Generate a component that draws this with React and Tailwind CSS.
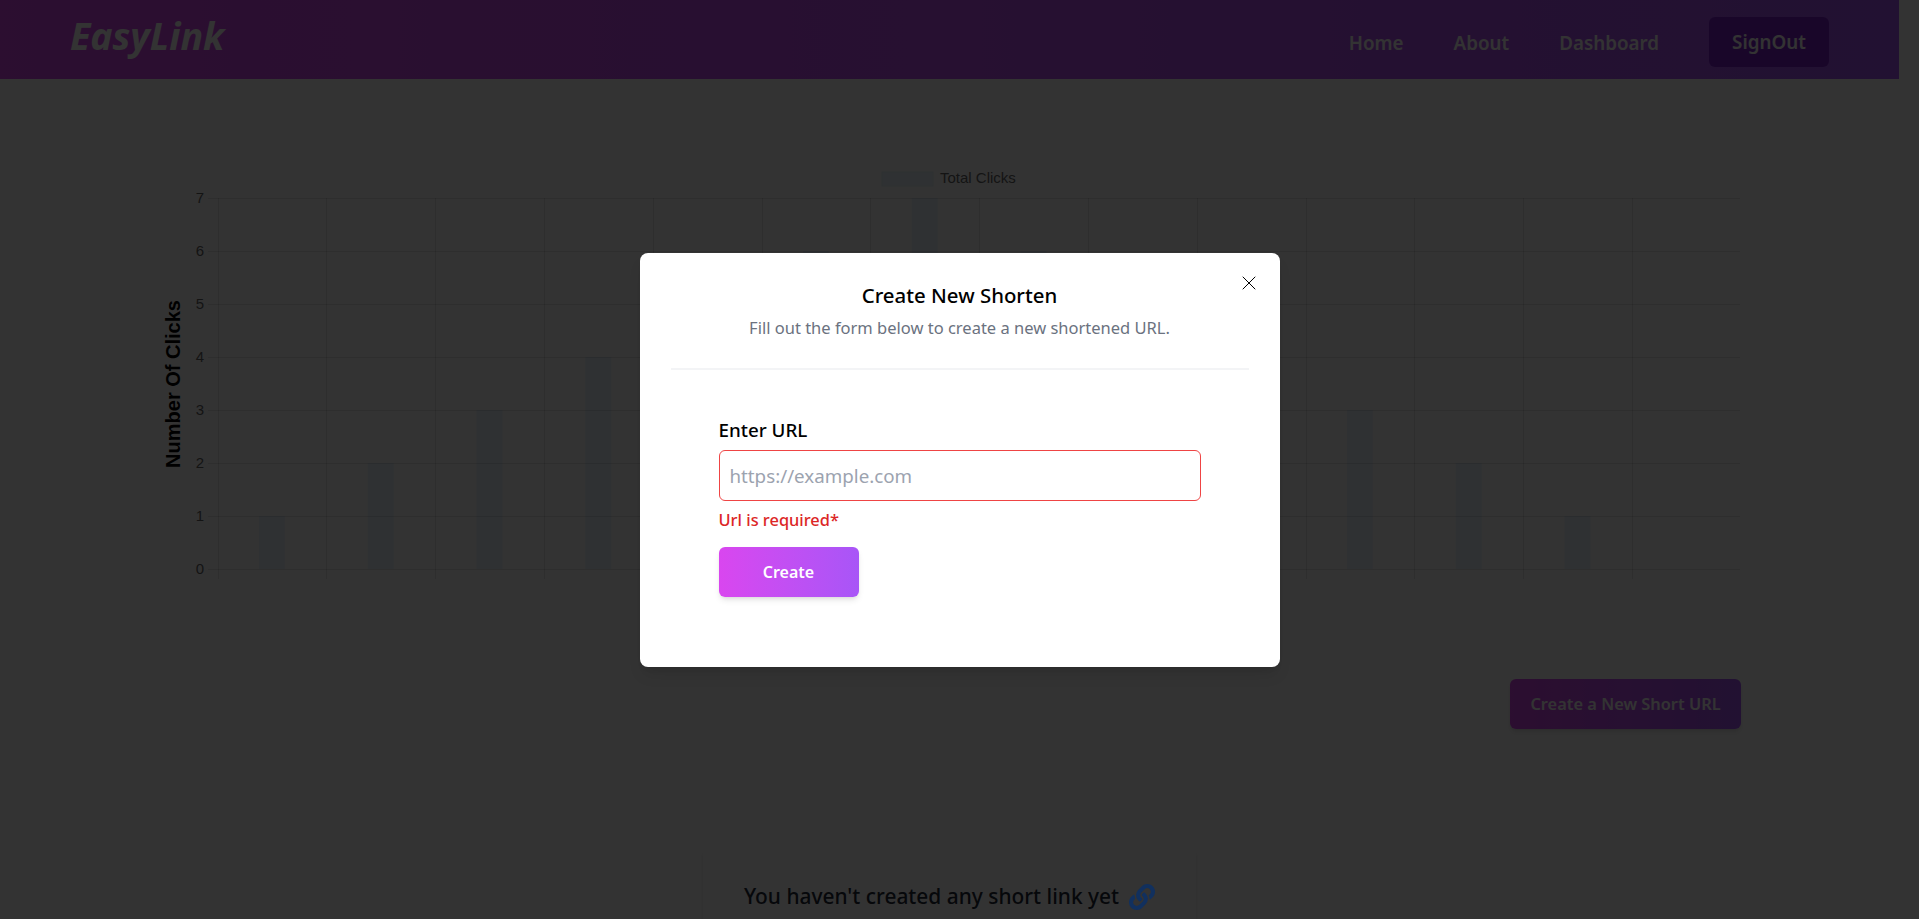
import React from 'react';
import { FaLink } from 'react-icons/fa';
import { X } from 'lucide-react';

const segoe = 'font-["Noto_Sans",sans-serif]';

const clicks = [1, 2, 3, 4, 5, 6, 7, 6, 5, 4, 3, 2, 1, 0];
const chartLeft = 217.5;
const chartBottom = 569;
const colWidth = 108.8;
const rowHeight = 53;

// same picture as the chart.js canvas: grid, bars, ticks and legend
const ClicksChart = () => (
  <svg width="1899" height="440" viewBox="0 140 1899 440" className="block" fontFamily="'Liberation Sans', Arial, sans-serif">
    <rect x="882" y="172" width="51" height="14" fill="#ebf6fd" stroke="#e4eff7" />
    <text x="940" y="183" fontSize="15" fill="#666">Total Clicks</text>
    {clicks.map((value, i) => (
      <rect
        key={i}
        x={chartLeft + colWidth * (i + 0.5) - 13}
        y={chartBottom - value * rowHeight}
        width="26"
        height={value * rowHeight}
        fill="#ebf6fd"
      />
    ))}
    {[0, 1, 2, 3, 4, 5, 6, 7].map((n) => (
      <g key={n}>
        <line x1="208" x2="1740" y1={chartBottom - n * rowHeight + 0.5} y2={chartBottom - n * rowHeight + 0.5} stroke="#000" strokeOpacity="0.1" />
        <text x="204" y={chartBottom - n * rowHeight + 5} fontSize="15" fill="#666" textAnchor="end">{n}</text>
      </g>
    ))}
    {clicks.map((_, i) => (
      <line key={i} x1={Math.round(chartLeft + colWidth * i) + 0.5} x2={Math.round(chartLeft + colWidth * i) + 0.5} y1="198" y2="579" stroke="#000" strokeOpacity="0.1" />
    ))}
    <text transform="translate(180 384) rotate(-90)" fontSize="20" fontWeight="700" fill="#000" textAnchor="middle">Number Of Clicks</text>
  </svg>
);

const Navbar = () => (
  <nav className="h-[79px] bg-gradient-to-r from-[#d946ef] to-[#a855f7] flex items-center justify-between pl-[70px] pr-[70px]">
    <h1 className="text-[37.5px] leading-none font-bold italic text-white -mt-[8px]">EasyLink</h1>
    <ul className="flex items-center text-[18.8px] font-semibold text-white mt-[5px]">
      <li className="mr-[50px] pt-[2px]">Home</li>
      <li className="mr-[50px] pt-[2px]">About</li>
      <li className="mr-[50px] pt-[2px]">Dashboard</li>
      <li className="w-[120px] h-[50px] rounded-md bg-[#7e22ce] flex items-center justify-center">SignOut</li>
    </ul>
  </nav>
);

const App = () => (
  <div className={`relative h-[919px] overflow-hidden bg-white ${segoe}`}>
    <div className="w-[1899px]">
      <Navbar />
      <div className="pt-[61px]">
        <ClicksChart />
      </div>
      <div className="flex justify-end pr-[158px] mt-[99px]">
        <button className="w-[231px] h-[50px] rounded-md bg-gradient-to-r from-[#d946ef] to-[#a855f7] text-white font-semibold text-[16.4px] shadow-md">
          Create a New Short URL
        </button>
      </div>
      <div className="flex justify-center mt-[119px]">
        <div className="w-[493px] h-[120px] rounded-md shadow-md flex justify-center pt-[33px] gap-[10px]">
          <span className="text-[20.9px] font-medium text-[#1f2937] leading-[30px]">You haven't created any short link yet</span>
          <FaLink className="relative z-10 text-[26px] text-[#11305e] mt-[3px]" />
        </div>
      </div>
    </div>

    {/* modal */}
    <div className="absolute inset-0 bg-black/80 flex justify-center pt-[253px]">
      <div className="relative w-[640px] h-[414px] bg-white rounded-lg shadow-lg">
        <button className="absolute top-[18px] right-[19px] text-black">
          <X size={24} strokeWidth={1} />
        </button>
        <div className="text-center pt-[27px]">
          <h2 className="text-[20.4px] leading-[30px] font-medium text-black">Create New Shorten</h2>
          <p className="text-[16.5px] leading-[24px] mt-[6px] text-[#6b7280]">Fill out the form below to create a new shortened URL.</p>
        </div>
        <hr className="mx-[31px] mt-[28px] border-t-2 border-[#f3f4f6]" />
        <form className="pl-[79px] pr-[79px] pt-[46px]">
          <label className="block text-[18.8px] leading-[28px] font-medium text-black">Enter URL</label>
          <input
            placeholder="https://example.com"
            className="block w-full h-[51px] mt-[6px] px-[10px] rounded-md border border-[#ef4444] text-[18.75px] outline-none placeholder:text-[#9ca3af]"
          />
          <p className="mt-[7px] text-[16.4px] leading-[24px] font-medium text-[#dc2626]">Url is required*</p>
          <button type="button" className="mt-[15px] w-[140px] h-[50px] rounded-md bg-gradient-to-r from-[#d946ef] to-[#a855f7] text-white font-semibold text-[16px] shadow-md">
            Create
          </button>
        </form>
      </div>
    </div>
  </div>
);

export default App;
